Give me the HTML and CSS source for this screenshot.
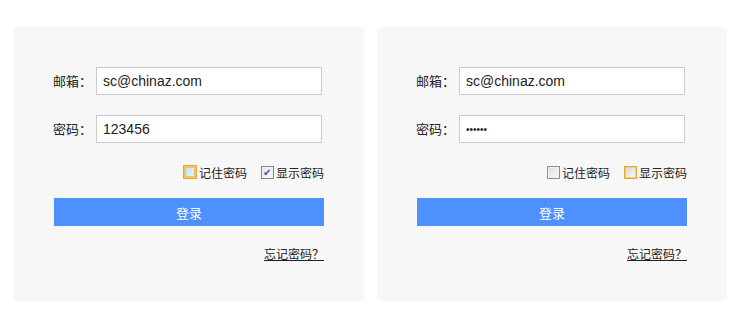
FILE: index.html
```html
<!DOCTYPE html>
<html lang="zh-CN">
<head>
    <meta charset="UTF-8">
    <meta name="viewport" content="width=device-width, initial-scale=1.0">
    <title>登录</title>
    <link rel="stylesheet" href="styles.css">
</head>
<body>

<div class="wrap">
    <form class="login_box">
        <div class="row">
            <label class="lbl">邮箱：</label>
            <input type="text" class="txt" value="sc@chinaz.com">
        </div>
        <div class="row">
            <label class="lbl">密码：</label>
            <input type="text" class="txt" value="123456">
        </div>
        <div class="opts">
            <span class="ck"><span class="box hover blue"></span>记住密码</span>
            <span class="ck"><span class="box checked">&#10004;</span>显示密码</span>
        </div>
        <button type="button" class="btn">登录</button>
        <div class="forget"><a href="#">忘记密码？</a></div>
    </form>

    <form class="login_box">
        <div class="row">
            <label class="lbl">邮箱：</label>
            <input type="text" class="txt" value="sc@chinaz.com">
        </div>
        <div class="row">
            <label class="lbl">密码：</label>
            <input type="password" class="txt pwd" value="123456">
        </div>
        <div class="opts">
            <span class="ck"><span class="box"></span>记住密码</span>
            <span class="ck"><span class="box hover"></span>显示密码</span>
        </div>
        <button type="button" class="btn">登录</button>
        <div class="forget"><a href="#">忘记密码？</a></div>
    </form>
</div>

</body>
</html>
```

FILE: styles.css
```css
* {
    margin: 0;
    padding: 0;
    box-sizing: border-box;
}
body {
    background: #fff;
    font-family: "Noto Sans CJK SC", "Liberation Sans", sans-serif;
    font-size: 12px;
    color: #333;
}
.wrap {
    display: flex;
    gap: 13px;
    padding: 27px 14px;
}
.login_box {
    width: 350px;
    height: 274px;
    background: #f7f7f7;
    padding: 40px 40px 0 39px;
}
.row {
    display: flex;
    align-items: center;
    margin-bottom: 20px;
}
.lbl {
    width: 43px;
    font-size: 13px;
    line-height: 28px;
    color: #222;
}
.txt {
    width: 226px;
    height: 28px;
    border: 1px solid #ccc;
    background: #fff;
    padding: 0 6px;
    font-family: "Liberation Sans", Arial, sans-serif;
    font-size: 14px;
    color: #222;
    outline: none;
}
.pwd {
    font-size: 10px;
}
.opts {
    display: flex;
    justify-content: flex-end;
    gap: 14px;
    height: 18px;
    align-items: center;
}
.ck {
    display: flex;
    align-items: center;
    gap: 2px;
    font-size: 12px;
    color: #222;
}
.box {
    width: 13px;
    height: 13px;
    border: 1px solid #8f8f8f;
    background: linear-gradient(135deg, #dcdcdc, #fafafa);
    box-shadow: inset 0 0 0 1px #f2f2f2;
    display: flex;
    align-items: center;
    justify-content: center;
    font-size: 10px;
    line-height: 1;
    color: #2d55b8;
}
.box.hover {
    border-color: #e0a93c;
    box-shadow: inset 0 0 0 1px #f8cf6a;
    background: linear-gradient(135deg, #d6d6d6, #fbfbfb);
}
.box.hover.blue {
    background: linear-gradient(135deg, #bfe0f7, #eaf6fd);
    box-shadow: inset 0 0 0 2px #f6c25c;
    width: 14px;
    height: 14px;
}
.box.checked {
    border-color: #888;
    background: linear-gradient(135deg, #e4e4e4, #fdfdfd);
}
.btn {
    display: block;
    width: 270px;
    height: 28px;
    margin-top: 17px;
    margin-left: 1px;
    border: none;
    background: #4d90fe;
    color: #fff;
    font-family: "Noto Sans CJK SC", sans-serif;
    font-size: 13px;
}
.forget {
    text-align: right;
    margin-top: 19px;
    width: 271px;
}
.forget a {
    color: #222;
    font-size: 12px;
    text-decoration: underline;
}
```
